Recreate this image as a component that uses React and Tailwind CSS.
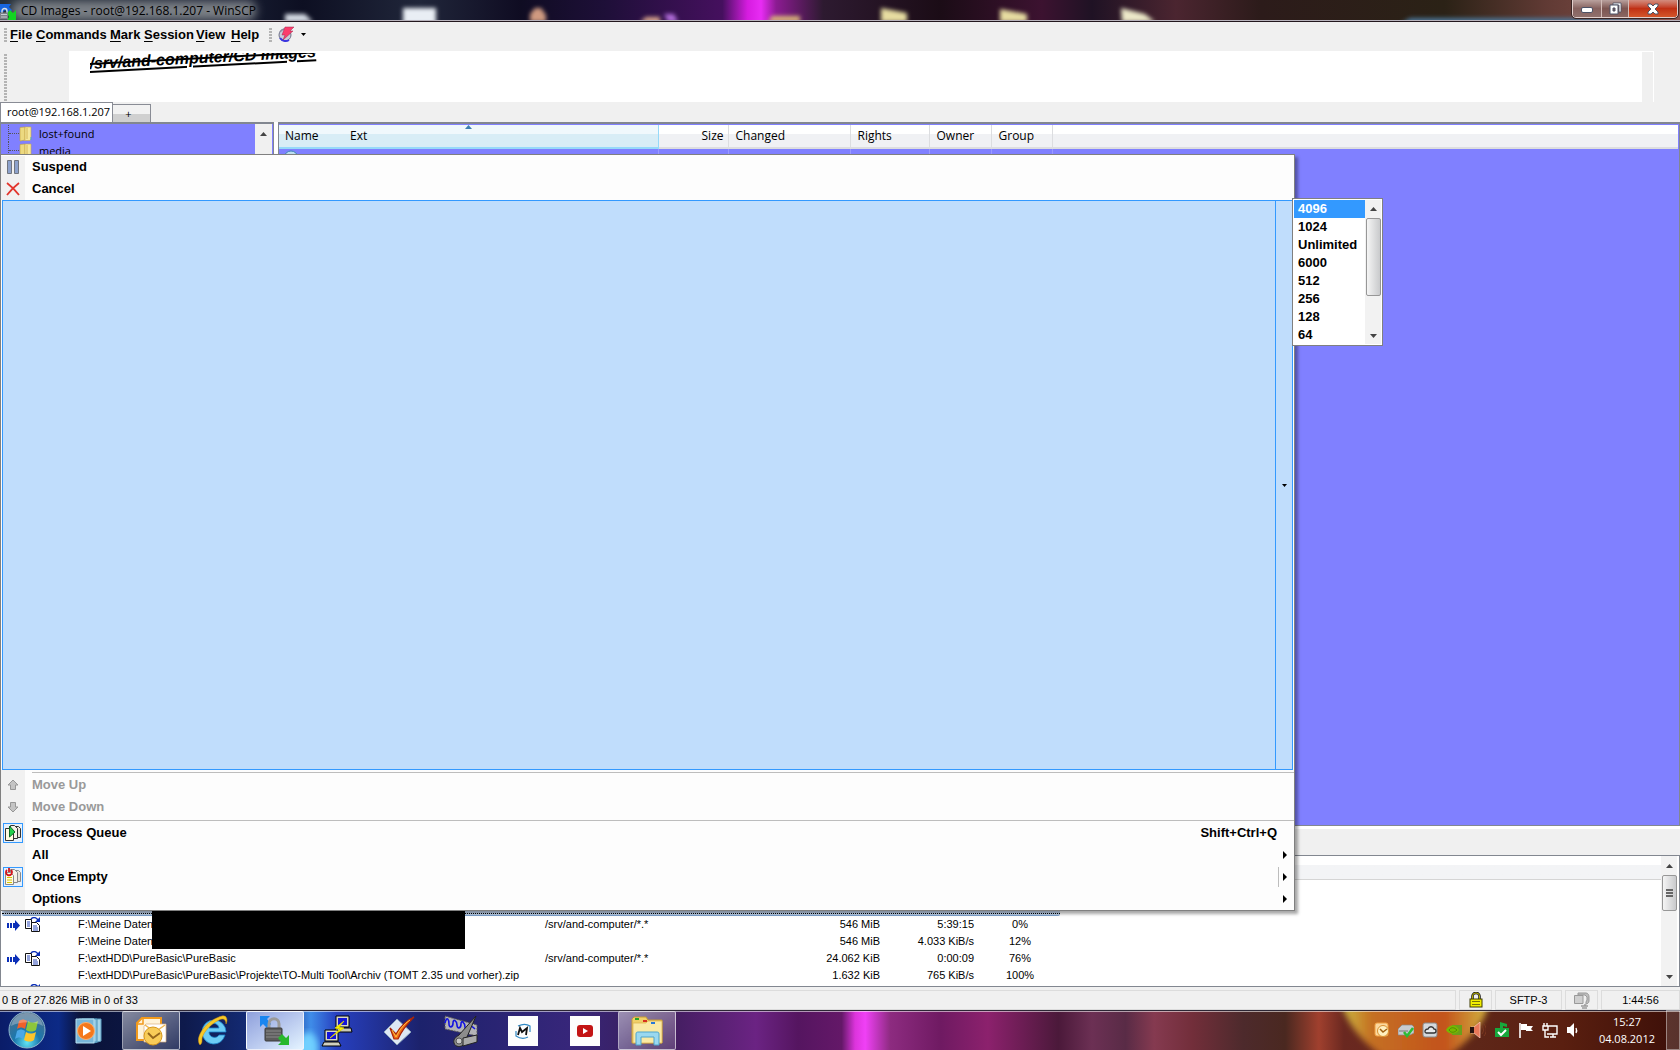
import clsx from "clsx";

const SPEEDS = ["4096", "1024", "Unlimited", "6000", "512", "256", "128", "64"];

const QUEUE = [
  { busy: true, source: "F:\\Meine Daten", target: "/srv/and-computer/*.*", size: "546 MiB", speed: "5:39:15", progress: "0%" },
  { source: "F:\\Meine Daten", size: "546 MiB", speed: "4.033 KiB/s", progress: "12%" },
  { busy: true, source: "F:\\extHDD\\PureBasic\\PureBasic", target: "/srv/and-computer/*.*", size: "24.062 KiB", speed: "0:00:09", progress: "76%" },
  { source: "F:\\extHDD\\PureBasic\\PureBasic\\Projekte\\TO-Multi Tool\\Archiv (TOMT 2.35 und vorher).zip", size: "1.632 KiB", speed: "765 KiB/s", progress: "100%" },
];

const MENUS = [
  { label: "File", width: "w-[26px]" },
  { label: "Commands", width: "w-[74px]" },
  { label: "Mark", width: "w-[34px]" },
  { label: "Session", width: "w-[52px]" },
  { label: "View", width: "w-[35px]" },
  { label: "Help", width: "w-[34px]" },
];

/* ---------- icons ---------- */

function AppIcon() {
  return (
    <svg width="16" height="18" viewBox="0 0 16 18" aria-hidden="true">
      <path d="M0 2h11L9 5l3 3-3 4-4-4-3 3-2-1z" fill="#1766e0" />
      <path d="M16 18H7l2-3-2-4 3-3 3 3 3-3z" fill="#12d422" />
      <path d="M2 11V9a2 2 0 0 1 5 0v2" fill="none" stroke="#d8dde2" strokeWidth="1.4" />
      <rect x="0" y="10.500" width="8" height="7" fill="#7c8288" />
      <path d="M1 12.500h6M1 15h6" stroke="#c7ccd2" />
    </svg>
  );
}

function LightningIcon() {
  return (
    <svg width="17" height="17" viewBox="0 0 17 17" aria-hidden="true">
      <circle cx="7" cy="9" r="6" fill="#c9ccd8" stroke="#70728a" />
      <path d="M2 12c2 3 6 4 9 2" stroke="#3a35e0" strokeWidth="2" fill="none" />
      <path d="M2 6a7 7 0 0 1 4-3" stroke="#8a8ca0" strokeWidth="1.500" fill="none" />
      <path d="M7 1h9l-4 4h3L5 14l2-5H4z" fill="#fb3d6c" stroke="#a02850" strokeWidth=".5" />
    </svg>
  );
}

function FolderIcon() {
  return (
    <svg className="shrink-0" width="14" height="16" viewBox="0 0 14 16" aria-hidden="true">
      <path d="M1 1.500 6 1v13l-5 1z" fill="#ecd980" stroke="#c0a040" strokeWidth=".6" />
      <path d="M6 1h6v12l-1 1.500H5l1-1z" fill="#f5e79c" stroke="#c7aa4c" strokeWidth=".6" />
      <path d="M8 2v11" stroke="#d7b858" />
      <path d="M12 11v3" stroke="#4aa0d8" />
    </svg>
  );
}

function PauseIcon() {
  return (
    <svg width="14" height="16" viewBox="0 0 14 16" aria-hidden="true">
      <path d="M1.500 1.500h4v13h-4zM8.500 1.500h4v13h-4z" fill="#8da2cc" stroke="#70757f" />
    </svg>
  );
}

function CrossIcon() {
  return (
    <svg width="14" height="14" viewBox="0 0 14 14" aria-hidden="true">
      <path d="M1 1c4 3 8 7 12 12M13 1C9 4 5 8 1 13" stroke="#e2352c" strokeWidth="1.800" fill="none" />
    </svg>
  );
}

function MoveIcon({ down }) {
  return (
    <svg className={clsx(down && "rotate-180")} width="12" height="12" viewBox="0 0 12 12" aria-hidden="true">
      <path d="M6 1 1 6h2.500v4.500h5V6H11z" fill="#c4c4c4" stroke="#979797" />
    </svg>
  );
}

function QueueIcon({ stop }) {
  const line = stop ? "#8a8a8a" : "#333";
  return (
    <svg width="18" height="18" viewBox="0 0 18 18" aria-hidden="true">
      <path d="M9.500 2.500h5l2 2v9h-7z" fill="#e8e4da" stroke={line} />
      <path d="M6.500 1.500h4l3 3v10h-7z" fill="#f4f1e8" stroke={line} />
      <path d="M1.500 4.500h5l3 3v9h-8z" fill="#fffbe0" stroke={line} />
      {stop ? (
        <>
          <path d="M3 9.500h5M3 12h5M3 14.500h5" stroke="#d9c600" />
          <path d="M3 2a3 3 0 1 0 4 0M5 0v4" fill="none" stroke="#d4131b" strokeWidth="1.800" />
        </>
      ) : (
        <path d="M5.500 2v11L11 8z" fill="#22d04c" stroke="#0b6a22" />
      )}
    </svg>
  );
}

function TransferIcons() {
  return (
    <svg width="36" height="16" viewBox="0 0 36 16" aria-hidden="true">
      <path d="M0 6h2v5H0zM3 6h2v5H3zM6 6h2V3l5 5.500L8 14v-3H6z" fill="#0b2fb8" />
      <path d="M18.500 2.500h6v9h-6z" fill="#fff" stroke="#111" />
      <path d="M24.500 5.500h5l3 3v6h-8z" fill="#fff" stroke="#111" />
      <path d="M20 5h3M20 7h3M20 9h3M26 9h4M26 11h5M26 13h5" stroke="#2a49b8" />
      <path d="M24 2c2-2 5-2 7 1" fill="none" stroke="#0b2fb8" strokeWidth="1.500" />
      <path d="M33 0v5h-5z" fill="#0b2fb8" />
    </svg>
  );
}

function Triangle({ dir = "up", className = "text-[#444]" }) {
  const shapes = {
    up: { w: 7, h: 4, d: "M0 4l3.500-4L7 4z" },
    down: { w: 7, h: 4, d: "M0 0h7L3.500 4z" },
    right: { w: 4, h: 8, d: "M0 0v8l4-4z" },
    caret: { w: 5, h: 3, d: "M0 0h5L2.500 3z" },
  };
  const { w, h, d } = shapes[dir];
  return (
    <svg className={className} width={w} height={h} aria-hidden="true">
      <path d={d} fill="currentColor" />
    </svg>
  );
}

function PadlockIcon() {
  return (
    <svg width="14" height="16" viewBox="0 0 14 16" aria-hidden="true">
      <path d="M3.500 7V4a3.500 3 0 0 1 7 0v3" fill="none" stroke="#222" strokeWidth="2.600" />
      <path d="M3.500 7V4a3.500 3 0 0 1 7 0v3" fill="none" stroke="#b8b000" />
      <rect x="1" y="7" width="12" height="8" fill="#f2ee00" stroke="#3c3a00" />
      <path d="M3 9.500h8M3 12.500h8" stroke="#77730a" />
    </svg>
  );
}

function ClampIcon() {
  return (
    <svg width="17" height="17" viewBox="0 0 17 17" aria-hidden="true">
      <path d="M5 1h8c2 0 3 2 3 4v4c0 2-2 3-3 3v-2l1-2V5l-2-2H5z" fill="#bdbdbd" stroke="#999" />
      <path d="M1.500 3.500H10v8H1.500z" fill="#cfcfcf" stroke="#999" />
      <path d="M12 12v2M8 14h7M9 16h5" stroke="#9a9a9a" strokeWidth="1.500" />
    </svg>
  );
}

/* ---------- title bar ---------- */

function TitleBackdrop() {
  return (
    <svg className="absolute inset-0 h-full w-full" viewBox="0 0 1680 22" preserveAspectRatio="none" aria-hidden="true">
      <defs>
        <linearGradient id="titleSky">
          <stop offset="0" stopColor="#26303a" />
          <stop offset=".14" stopColor="#171d31" />
          <stop offset=".18" stopColor="#0d0f22" />
          <stop offset=".25" stopColor="#20263a" />
          <stop offset=".31" stopColor="#0f0c22" />
          <stop offset=".36" stopColor="#1e0f38" />
          <stop offset=".43" stopColor="#45105e" />
          <stop offset=".445" stopColor="#d61ce0" />
          <stop offset=".453" stopColor="#e82cf4" />
          <stop offset=".462" stopColor="#8c1b92" />
          <stop offset=".49" stopColor="#2d1a30" />
          <stop offset=".56" stopColor="#1b0c16" />
          <stop offset=".62" stopColor="#3c1230" />
          <stop offset=".65" stopColor="#1f1224" />
          <stop offset=".7" stopColor="#4b2530" />
          <stop offset=".75" stopColor="#2c1b1a" />
          <stop offset=".86" stopColor="#2b2216" />
          <stop offset=".92" stopColor="#603a34" />
          <stop offset="1" stopColor="#8d5650" />
        </linearGradient>
        <filter id="soft" x="-20%" y="-50%" width="140%" height="200%">
          <feGaussianBlur stdDeviation="2" />
        </filter>
        <filter id="softer" x="-20%" y="-80%" width="140%" height="260%">
          <feGaussianBlur stdDeviation="5" />
        </filter>
      </defs>
      <rect width="1680" height="22" fill="url(#titleSky)" />
      <rect x="12" y="1" width="244" height="19" rx="8" fill="#7b8086" filter="url(#softer)" />
      <g filter="url(#soft)">
        <path d="M285 14h20l8 8h-28z" fill="#d5dbe4" />
        <rect x="403" y="8" width="33" height="16" fill="#e9eef4" />
        <path d="M530 22v-8l5-6h6l5 7v7z" fill="#cf9a80" />
        <path d="M640 22l6-5h14v7z" fill="#d9a48c" />
        <path d="M664 14h10l4 8h-10z" fill="#b06cd8" />
        <path d="M768 22l4-6h28v6z" fill="#d8b478" />
        <path d="M881 8l26 5v9h-26z" fill="#e6dca0" />
        <path d="M1000 9l27 5v8h-27z" fill="#e6dca0" />
        <path d="M1121 8l24 6 10 8h-33z" fill="#ece8c8" />
        <path d="M1410 18h230v6h-240z" fill="#4b7595" />
      </g>
      <path d="M0 20.500h1680" stroke="#b9b4bd" />
      <path d="M0 21.500h1680" stroke="#24181f" />
    </svg>
  );
}

function TitleBar() {
  return (
    <header className="relative flex h-[22px] shrink-0 items-center overflow-hidden">
      <TitleBackdrop />
      <div className="relative flex flex-1 items-center gap-[5px]">
        <AppIcon />
        <h1 className="text-[12px] leading-4 text-black">CD Images - root@192.168.1.207 - WinSCP</h1>
      </div>
      <div className="relative mr-0.5 flex h-[18px] self-start overflow-hidden rounded-b border border-t-0 border-[#e2cfcc] outline outline-[#3a2524]">
        <button aria-label="Minimize" className="flex w-7 items-end justify-center bg-gradient-to-b from-[#b9a19e] via-[#86625f] to-[#90706c] pb-1">
          <span className="h-1.5 w-3 rounded-xs border border-[#4c5266] bg-white" />
        </button>
        <button aria-label="Restore" className="flex w-7 items-center justify-center border-x border-[#d3bcb8] bg-gradient-to-b from-[#b9a19e] via-[#7c5551] to-[#8a6662]">
          <svg width="13" height="13" viewBox="0 0 13 13">
            <path d="M4 1h8v9h-2V3H4z" fill="#fff" stroke="#4c5266" strokeWidth=".8" />
            <path d="M1 3h8v9H1z M4 6v3h2V6z" fill="#fff" fillRule="evenodd" stroke="#4c5266" />
          </svg>
        </button>
        <button aria-label="Close" className="flex w-12 items-center justify-center bg-gradient-to-b from-[#d28c7e] via-[#c03014] to-[#d4552a]">
          <svg width="14" height="12" viewBox="0 0 14 12">
            <path d="M2 1h3l2 2 2-2h3v2L9 6l3 3v2H9L7 9l-2 2H2V9l3-3-3-3z" fill="#fff" stroke="#4c5266" />
          </svg>
        </button>
      </div>
    </header>
  );
}

/* ---------- menu bar, address bar, tabs ---------- */

function Grip({ className }) {
  return <span className={clsx("w-[3px] bg-[repeating-linear-gradient(#b4b4b4_0_2px,transparent_2px_3px)]", className)} />;
}

function MenuBar() {
  return (
    <nav className="flex h-[29px] shrink-0 items-center bg-[#f0f0f0] pb-1 pl-1 font-['Liberation_Sans',sans-serif] text-[13px] font-bold">
      <Grip className="mr-[3px] h-3.5" />
      {MENUS.map(({ label, width }) => (
        <button key={label} className={clsx("shrink-0 overflow-hidden text-left leading-5 whitespace-nowrap", width)}>
          <span className="underline underline-offset-2">{label[0]}</span>
          {label.slice(1)}
        </button>
      ))}
      <Grip className="ml-1 h-3.5" />
      <button aria-label="Disconnect" className="ml-1.5 flex items-center gap-1.5">
        <LightningIcon />
        <Triangle dir="caret" className="text-black" />
      </button>
    </nav>
  );
}

function AddressBar() {
  return (
    <div className="flex h-[51px] shrink-0 bg-[#f0f0f0] pl-1">
      <Grip className="mt-[3px]" />
      <div className="ml-[62px] flex-1 overflow-hidden bg-white pt-0.5 pl-[21px]">
        <div className="h-12 overflow-hidden">
          <p className="w-max origin-bottom-left -rotate-3 font-['Liberation_Sans',sans-serif] text-[16px] leading-[22px] font-bold italic">
            <span className="underline decoration-2 underline-offset-2">
              <span className="line-through decoration-2">/srv/and-computer/CD Images</span>
            </span>
          </p>
        </div>
      </div>
      <div className="mr-[26px] w-3 border-t border-r border-white" />
    </div>
  );
}

function Tabs() {
  return (
    <div className="flex h-5 shrink-0 items-end bg-[#f0f0f0] text-[11px]">
      <button className="h-5 w-[113px] border border-b-0 border-[#898c95] bg-white pl-1.5 text-left whitespace-nowrap text-black">root@192.168.1.207</button>
      <button aria-label="New tab" className="h-[18px] w-[38px] border border-b-0 border-l-0 border-[#898c95] bg-gradient-to-b from-[#f2f2f2] from-50% to-[#d0d0d0] to-50% pr-1.5 leading-4">
        +
      </button>
    </div>
  );
}

/* ---------- directory tree and file list ---------- */

function Tree() {
  return (
    <aside className="flex w-[274px] shrink-0 border-x border-t-2 border-[#828790] bg-[#8080ff]">
      <ul className="flex-1 overflow-hidden pt-px text-[11px] leading-[17px]">
        {["lost+found", "media"].map((name) => (
          <li key={name} className="flex items-center">
            <span className="ml-[7px] h-[17px] w-px border-l border-dotted border-[#555]" />
            <span className="w-2.5 border-t border-dotted border-[#555]" />
            <FolderIcon />
            <span className="ml-1.5">{name}</span>
          </li>
        ))}
      </ul>
      <div className="mr-px flex w-[17px] justify-center bg-[#f0f0f0] pt-2">
        <Triangle />
      </div>
    </aside>
  );
}

const COLUMNS = [
  { name: "Size", width: "w-[70px]", align: "pr-1 text-right" },
  { name: "Changed", width: "w-[122px]", align: "pl-[7px]" },
  { name: "Rights", width: "w-[79px]", align: "pl-[7px]" },
  { name: "Owner", width: "w-[62px]", align: "pl-[7px]" },
  { name: "Group", width: "w-[61px]", align: "pl-[7px]" },
];

function FileList() {
  return (
    <main className="min-w-0 flex-1 border-x border-t-2 border-b border-[#828790] bg-[#8080ff] pt-px pr-px">
      <table className="w-full table-fixed border-collapse text-[12px]">
        <thead>
          <tr className="h-[23px] bg-gradient-to-b from-white from-40% to-[#f0f1f4] to-40% text-left">
            <th className="relative w-[379px] border-r border-b-2 border-[#96d9f9] bg-gradient-to-b from-[#f0f8fc] from-40% to-[#d8edf6] to-40% pl-1.5 font-normal">
              <span className="inline-block w-[65px]">Name</span>Ext
              <Triangle className="absolute top-0 left-[186px] text-[#3c7fb1]" />
            </th>
            {COLUMNS.map(({ name, width, align }) => (
              <th key={name} className={clsx("border-r border-b-2 border-[#dcdde0] font-normal", width, align)}>
                {name}
              </th>
            ))}
            <th className="border-b-2 border-l border-[#dcdde0]" />
          </tr>
        </thead>
        <tbody>
          <tr className="h-[18px]">
            <td className="border-r border-[#9a9aff] pl-1">
              <svg width="16" height="16" viewBox="0 0 16 16" aria-hidden="true">
                <circle cx="8" cy="8" r="7" fill="#bcdcf0" stroke="#3f86b8" />
                <circle cx="8" cy="8" r="2" fill="#fff" />
              </svg>
            </td>
            {COLUMNS.map(({ name }) => (
              <td key={name} className="border-r border-[#9a9aff]" />
            ))}
            <td />
          </tr>
        </tbody>
      </table>
    </main>
  );
}

/* ---------- transfer queue ---------- */

function Queue() {
  return (
    <section className="flex h-[132px] shrink-0 border border-[#828790] bg-white">
      <div className="min-w-0 flex-1 overflow-hidden">
        <div className="h-6 border-b border-[#d5d5d5] bg-gradient-to-b from-white from-40% to-[#f3f4f6] to-40%" />
        <div className="mr-[601px] ml-px h-9 rounded-b-xs border-b border-[#7da2ce] bg-[#c5d8f0] pb-px">
          <div className="h-full border-b border-dotted border-black" />
        </div>
        <table className="w-full table-fixed font-['Liberation_Sans',sans-serif] text-[11px] leading-[17px] whitespace-nowrap">
          <colgroup>
            <col className="w-[77px]" />
            <col className="w-[467px]" />
            <col className="w-[225px]" />
            <col className="w-[110px]" />
            <col className="w-[94px]" />
            <col className="w-[92px]" />
            <col />
          </colgroup>
          <tbody>
            {QUEUE.map((row) => (
              <tr key={row.source + row.progress} className="h-[17px]">
                <td className="pl-1.5">{row.busy && <TransferIcons />}</td>
                <td>{row.source}</td>
                <td>{row.target}</td>
                <td className="text-right">{row.size}</td>
                <td className="text-right">{row.speed}</td>
                <td className="text-center">{row.progress}</td>
                <td />
              </tr>
            ))}
            <tr>
              <td className="pl-1.5 align-top">
                <TransferIcons />
              </td>
            </tr>
          </tbody>
        </table>
      </div>
      <div className="mr-0.5 flex w-4 flex-col items-center bg-[#f2f2f2] pt-2 pb-[7px]">
        <Triangle />
        <div className="mt-[7px] flex h-9 w-[15px] flex-col items-center justify-center gap-px rounded-xs border border-[#979797] bg-gradient-to-r from-[#f5f5f5] to-[#c9cacc]">
          <span className="h-0.5 w-[7px] bg-[#666]" />
          <span className="h-0.5 w-[7px] bg-[#666]" />
          <span className="h-0.5 w-[7px] bg-[#666]" />
        </div>
        <Triangle dir="down" className="mt-auto text-[#444]" />
      </div>
    </section>
  );
}

function StatusBar() {
  return (
    <footer className="flex h-[23px] shrink-0 gap-[3px] bg-[#f0f0f0] pt-[3px] font-['Liberation_Sans',sans-serif] text-[11px]">
      <p className="flex flex-1 items-center border border-l-0 border-[#dcdcdc] pl-0.5">0 B of 27.826 MiB in 0 of 33</p>
      <span className="flex w-[33px] items-center justify-center border border-[#dcdcdc]"><PadlockIcon /></span>
      <span className="flex w-[67px] items-center justify-center border border-[#dcdcdc]">SFTP-3</span>
      <span className="flex w-[33px] items-center justify-center border border-[#dcdcdc]"><ClampIcon /></span>
      <span className="flex w-[79px] items-center justify-center border border-[#dcdcdc]">1:44:56</span>
    </footer>
  );
}

/* ---------- queue popup menu ---------- */

function MenuItem({ icon, label, shortcut, submenu, split, disabled, checked }) {
  return (
    <button disabled={disabled} className={clsx("flex h-[22px] w-full shrink-0 items-center text-left", disabled ? "text-[#999]" : "text-black")}>
      <span className="flex h-full w-6 items-center justify-center bg-[#f1f1f1]">
        <span className={clsx("flex items-center justify-center", checked && "size-5 border border-[#3399ff] bg-[#e6f0fb]")}>{icon}</span>
      </span>
      <span className="ml-[7px] flex-1">{label}</span>
      {shortcut && <span className="mr-[17px]">{shortcut}</span>}
      {submenu && (
        <span className={clsx("mr-[7px] flex h-5 items-center pl-1", split && "border-l border-[#bdbdbd]")}>
          <Triangle dir="right" className="text-black" />
        </span>
      )}
    </button>
  );
}

function Separator() {
  return (
    <div className="flex h-1 shrink-0 items-center">
      <span className="h-full w-6 bg-[#f1f1f1]" />
      <span className="ml-[7px] h-px flex-1 bg-[#bdbdbd]" />
    </div>
  );
}

function QueueMenu() {
  return (
    <div className="absolute top-[154px] right-[385px] bottom-[139px] left-0 flex flex-col border border-[#808080] bg-[#fdfdfd] font-['Liberation_Sans',sans-serif] text-[13px] font-bold shadow-[3px_3px_3px_rgba(0,0,0,0.35)]">
      <div className="h-px shrink-0" />
      <MenuItem icon={<PauseIcon />} label="Suspend" />
      <MenuItem icon={<CrossIcon />} label="Cancel" />
      <div className="mx-px flex min-h-0 flex-1 border border-[#3399ff] bg-[#c0ddfc]">
        <input aria-label="Speed limit" className="min-w-0 flex-1 bg-transparent outline-none" />
        <button aria-label="Choose speed" className="flex w-[17px] items-center justify-center border-l border-[#3399ff]">
          <Triangle dir="caret" className="text-black" />
        </button>
      </div>
      <Separator />
      <MenuItem icon={<MoveIcon />} label="Move Up" disabled />
      <MenuItem icon={<MoveIcon down />} label="Move Down" disabled />
      <Separator />
      <MenuItem icon={<QueueIcon />} label="Process Queue" shortcut="Shift+Ctrl+Q" checked />
      <MenuItem label="All" submenu />
      <MenuItem icon={<QueueIcon stop />} label="Once Empty" submenu split checked />
      <MenuItem label="Options" submenu />
    </div>
  );
}

function SpeedList() {
  return (
    <div className="absolute top-[198px] right-[297px] flex w-[91px] border border-[#808080] bg-white p-px">
      <select
        size={8}
        defaultValue="4096"
        aria-label="Speed"
        className="h-36 min-w-0 flex-1 overflow-hidden border-0 p-0 font-['Liberation_Sans',sans-serif] text-[13px] font-bold outline-none [scrollbar-width:none]"
      >
        {SPEEDS.map((speed) => (
          <option
            key={speed}
            value={speed}
            className="h-[18px] min-h-[18px] px-1 pt-px pb-0 leading-[17px] font-bold text-black checked:bg-[#3399ff] checked:bg-linear-to-r checked:from-[#3399ff] checked:to-[#3399ff] checked:[-webkit-text-fill-color:white]"
          >
            {speed}
          </option>
        ))}
      </select>
      <div className="flex w-4 flex-col items-center bg-[#f2f2f2] pt-[7px] pb-1.5">
        <Triangle />
        <div className="mt-[7px] h-[78px] w-[15px] rounded-xs border border-[#979797] bg-gradient-to-r from-[#f5f5f5] to-[#c9cacc]" />
        <Triangle dir="down" className="mt-auto text-[#444]" />
      </div>
    </div>
  );
}

/* ---------- taskbar ---------- */

function TaskbarBackdrop() {
  return (
    <svg className="absolute inset-0 h-full w-full" viewBox="0 0 1680 40" preserveAspectRatio="none" aria-hidden="true">
      <defs>
        <linearGradient id="taskSky">
          <stop offset="0" stopColor="#0a1c68" />
          <stop offset=".035" stopColor="#0c2a86" />
          <stop offset=".048" stopColor="#0a1238" />
          <stop offset=".11" stopColor="#0e1a4c" />
          <stop offset=".17" stopColor="#17348c" />
          <stop offset=".185" stopColor="#3f8ce8" />
          <stop offset=".2" stopColor="#2740c0" />
          <stop offset=".25" stopColor="#1c226c" />
          <stop offset=".34" stopColor="#37267a" />
          <stop offset=".39" stopColor="#3b1d5a" />
          <stop offset=".45" stopColor="#6b2383" />
          <stop offset=".475" stopColor="#551560" />
          <stop offset=".501" stopColor="#641868" />
          <stop offset=".509" stopColor="#dc34dc" />
          <stop offset=".515" stopColor="#f040f6" />
          <stop offset=".53" stopColor="#8d2b80" />
          <stop offset=".56" stopColor="#6f1a62" />
          <stop offset=".588" stopColor="#8c216d" />
          <stop offset=".63" stopColor="#4b193a" />
          <stop offset=".65" stopColor="#6c3054" />
          <stop offset=".67" stopColor="#592b46" />
          <stop offset=".687" stopColor="#853a50" />
          <stop offset=".71" stopColor="#722e3a" />
          <stop offset=".74" stopColor="#4d2a2c" />
          <stop offset=".765" stopColor="#4a2820" />
          <stop offset=".785" stopColor="#a0402e" />
          <stop offset=".8" stopColor="#6a2820" />
          <stop offset=".88" stopColor="#5e2618" />
          <stop offset=".93" stopColor="#5a1f10" />
          <stop offset="1" stopColor="#3c0f08" />
        </linearGradient>
        <linearGradient id="taskFlare">
          <stop offset="0" stopColor="#cdbb42" />
          <stop offset=".2" stopColor="#c47022" />
          <stop offset=".7" stopColor="#c3521c" />
          <stop offset="1" stopColor="#d2b440" />
        </linearGradient>
        <filter id="taskBlur">
          <feGaussianBlur stdDeviation="3" />
        </filter>
      </defs>
      <rect width="1680" height="40" fill="url(#taskSky)" />
      <path d="M1342-4h146c-4 18-20 36-40 50h-66c-20-14-34-32-40-50z" fill="url(#taskFlare)" filter="url(#taskBlur)" />
      <ellipse cx="308" cy="38" rx="10" ry="16" fill="#6fd0ff" filter="url(#taskBlur)" />
      <path d="M0 .5h1680" stroke="#2c2634" />
      <path d="M0 1.500h1680" stroke="#fff" strokeOpacity=".55" />
    </svg>
  );
}

function StartOrb() {
  return (
    <svg width="38" height="38" viewBox="0 0 38 38" aria-hidden="true">
      <defs>
        <radialGradient id="orb" cx=".5" cy=".85" r=".8">
          <stop offset="0" stopColor="#5fe4f5" />
          <stop offset=".45" stopColor="#1b78ad" />
          <stop offset="1" stopColor="#4a6d8c" />
        </radialGradient>
      </defs>
      <circle cx="19" cy="19" r="18" fill="url(#orb)" stroke="#8fb6cc" />
      <path d="M11 10c3-2 5-2 8 0l-2 8c-3-2-5-2-8 0z" fill="#f0602a" />
      <path d="M20 10c3 2 6 2 10 0l-2 9c-3 2-6 2-10 0z" fill="#8cc63c" />
      <path d="M9 20c3-2 5-2 8 0l-2 8c-3-2-5-2-8 0z" fill="#4aa8e8" />
      <path d="M18 21c3 2 6 2 10 0l-2 8c-3 2-6 2-10 0z" fill="#fcc52c" />
      <path d="M3 15C5 5 13 2 19 2s14 3 16 13c-9-5-22-5-32 0z" fill="#fff" opacity=".28" />
    </svg>
  );
}

function MediaPlayerIcon() {
  return (
    <svg width="28" height="26" viewBox="0 0 28 26" aria-hidden="true">
      <path d="M7 1h19v22l-7 2z" fill="#a7d6ea" stroke="#5a9cc0" />
      <path d="M4 1h18v23H4z" fill="#8cc4e0" stroke="#4c92b8" />
      <path d="M1 1h18v24H1z" fill="#78b6d8" stroke="#b8e0f0" />
      <circle cx="11" cy="13" r="8.500" fill="#f4781c" stroke="#fbb070" />
      <path d="M8 8v10l8-5z" fill="#fff" />
    </svg>
  );
}

function OutlookIcon() {
  return (
    <svg width="32" height="30" viewBox="0 0 32 30" aria-hidden="true">
      <path d="M7 2h19v22H2V7z" fill="#fff3d8" stroke="#f29a1c" strokeWidth="2" />
      <path d="M3 8h5V3" fill="none" stroke="#f29a1c" strokeWidth="1.500" />
      <path d="M11 8h20v18H9V10z" fill="#fff" stroke="#d8b080" strokeWidth=".7" />
      <path d="M10 9l10 7 10-7" fill="none" stroke="#f0b850" strokeWidth="1.500" />
      <circle cx="18" cy="20" r="9" fill="#f8cc58" stroke="#d8981c" />
      <path d="M13 17l5 5 7-5" fill="none" stroke="#94661c" strokeWidth="1.800" />
    </svg>
  );
}

function ExplorerEIcon() {
  return (
    <svg width="32" height="32" viewBox="0 0 32 32" aria-hidden="true">
      <path d="M28 20c-2 6-6 9-12 9A12 12 0 1 1 29 17H12c0 6 8 7 10 3zM12 13h10c-1-6-9-6-10 0z" fill="#6cccf6" stroke="#1a84cc" strokeWidth=".8" fillRule="evenodd" />
      <path d="M3 30C-3 23 9 5 25 1c5-1 6 4 4 8 0-5-3-6-7-4C12 10 4 20 5 26c0 2-1 3-2 4z" fill="#f8c928" stroke="#c88c10" strokeWidth=".5" />
    </svg>
  );
}

function WinScpIcon() {
  return (
    <svg width="34" height="32" viewBox="0 0 34 32" aria-hidden="true">
      <path d="M2 1h10L9 4l4 5-4 4-4-4-3 3z" fill="#1a86f0" />
      <path d="M11 15V9c0-7 10-7 10 0v6" fill="none" stroke="#9a9a9a" strokeWidth="3" />
      <rect x="7" y="13" width="17" height="13" rx="1" fill="#5c5c5c" stroke="#3a3a3a" />
      <path d="M8 16h15M8 19h15M8 22h15" stroke="#8a8a8a" />
      <path d="M31 30H20l3-3-3-4 4-4 4 4 3-3z" fill="#28b82c" />
    </svg>
  );
}

function PuttyIcon() {
  return (
    <svg width="32" height="32" viewBox="0 0 32 32" aria-hidden="true">
      <path d="M15 1h13v11H15z" fill="#d8d8c8" stroke="#000" />
      <path d="M17 3h9v7h-9z" fill="#1414d8" />
      <path d="M15 13h15l1 4H13z" fill="#c8c8b8" stroke="#000" />
      <path d="M4 15h13v11H4z" fill="#d8d8c8" stroke="#000" />
      <path d="M6 17h9v7H6z" fill="#1414d8" />
      <path d="M3 27h15l2 4H1z" fill="#d0d0c0" stroke="#000" />
      <path d="M23 6l-9 7 5 1-10 9 14-10-5-1z" fill="#f8f000" stroke="#e0d400" strokeWidth=".8" />
    </svg>
  );
}

function CheckIcon() {
  return (
    <svg width="32" height="30" viewBox="0 0 32 30" aria-hidden="true">
      <path d="M1 16L14 3l14 13-14 13z" fill="#dde8f4" stroke="#8ca4bc" />
      <path d="M7 12l6 6C17 11 22 5 31 1c-6 6-12 13-16 22h-4z" fill="#f06a18" stroke="#a82408" strokeWidth="1.200" />
      <path d="M9 14l4 7c4-8 8-13 14-17" fill="none" stroke="#fcc040" />
    </svg>
  );
}

function WaveIcon() {
  return (
    <svg width="34" height="34" viewBox="0 0 34 34" aria-hidden="true">
      <path d="M1 2l32 9v11L1 15z" fill="#b4b4b8" stroke="#555" strokeDasharray="2 1" />
      <path d="M1 9c2-8 4-3 4 1s4 4 4-1 4-2 4 2 4 4 4-1 4-1 4 3 3 4 4 1 3-2 6 1" stroke="#1414e0" strokeWidth="1.600" fill="none" />
      <path d="M32 2L20 30c-3 4-9 3-10-1s2-6 5-8z" fill="#8c8c8c" stroke="#222" />
      <path d="M19 24l14-3v7l-14 4z" fill="#aaa" stroke="#222" />
      <circle cx="15" cy="27" r="3" fill="#c8c8c8" stroke="#555" />
    </svg>
  );
}

function LogoMIcon() {
  return (
    <svg width="30" height="30" viewBox="0 0 30 30" aria-hidden="true">
      <rect width="30" height="30" fill="#fdfdfd" />
      <path d="M10 10c4-2 9-2 12 0v6M20 21c-4 2-9 1-12-1v-5" fill="none" stroke="#2f88c4" strokeWidth="1.200" />
      <path d="M10 19l2-7 2 4 5-4-1 7" fill="none" stroke="#111" strokeWidth="1.800" />
    </svg>
  );
}

function TubeIcon() {
  return (
    <svg width="30" height="30" viewBox="0 0 30 30" aria-hidden="true">
      <rect width="30" height="30" fill="#fdfdfd" />
      <rect x="7" y="9" width="16" height="12" rx="3" fill="#c31414" />
      <path d="M13 12v6l5-3z" fill="#fff" />
    </svg>
  );
}

function ExplorerIcon() {
  return (
    <svg width="34" height="31" viewBox="0 0 34 31" aria-hidden="true">
      <path d="M2 4l2-2h12l2 3h14v23H2z" fill="#f0cf68" stroke="#c49a38" />
      <path d="M3 8h13l2-2h14v22H3z" fill="#fae9a4" stroke="#d8b04c" strokeWidth=".7" />
      <path d="M5 3h4v2H5z" fill="#28a428" />
      <path d="M13 5h4v2h-4z" fill="#d83020" />
      <path d="M21 7h4v2h-4z" fill="#2878d8" />
      <path d="M6 30V19c0-2 1-2 3-2h17c2 0 3 0 3 2v11h-5v-8H11v8z" fill="#9ad8f0" stroke="#4fa4cc" />
    </svg>
  );
}

const TASKS = [
  { label: "Windows Media Player", icon: <MediaPlayerIcon /> },
  { label: "Outlook", icon: <OutlookIcon />, open: true },
  { label: "Internet Explorer", icon: <ExplorerEIcon /> },
  { label: "WinSCP", icon: <WinScpIcon />, active: true },
  { label: "PuTTY", icon: <PuttyIcon /> },
  { label: "Tasks", icon: <CheckIcon /> },
  { label: "Wave editor", icon: <WaveIcon /> },
  { label: "M", icon: <LogoMIcon /> },
  { label: "Video", icon: <TubeIcon /> },
  { label: "Explorer", icon: <ExplorerIcon />, open: true },
];

function TrayIcons() {
  return (
    <div className="flex items-center gap-2">
      <svg width="16" height="16" viewBox="0 0 16 16">
        <rect x="1" y="1" width="13" height="13" rx="2" fill="#fbd9a0" stroke="#f0a040" />
        <circle cx="9" cy="9" r="5.500" fill="#fff0c0" stroke="#d89030" />
        <path d="M6 7l3 3 4-3" fill="none" stroke="#a06010" strokeWidth="1.500" />
      </svg>
      <svg width="16" height="16" viewBox="0 0 16 16">
        <path d="M0 7l4-4h10l2 2v6l-4 2H0z" fill="#c8ccd0" stroke="#888" strokeWidth=".7" />
        <path d="M1 9h9" stroke="#777" />
        <path d="M6 10l3 4 6-8" fill="none" stroke="#2cbc34" strokeWidth="2.500" />
      </svg>
      <svg width="16" height="16" viewBox="0 0 16 16">
        <rect x="1" y="1" width="14" height="14" rx="2" fill="#d4d8dc" stroke="#888" />
        <path d="M4 11h8a2 2 0 0 0 0-4c-1-3-5-3-6 0-3 0-4 3-2 4z" fill="#e8eaec" stroke="#333" strokeWidth="1.300" />
      </svg>
      <svg width="16" height="16" viewBox="0 0 16 16">
        <path d="M6 3h10v10H6z" fill="#6aa01a" />
        <path d="M0 8c3-6 10-6 13 0-3 5-10 5-13 0z" fill="#76b900" />
        <path d="M3 8c2-3 5-3 8 0-3 3-6 3-8 0z" fill="none" stroke="#4d7c08" strokeWidth=".8" />
      </svg>
      <svg width="16" height="16" viewBox="0 0 16 16">
        <path d="M1 5h3l6-5v16l-6-5H1z" fill="#e87858" stroke="#fbd0c0" strokeWidth=".7" />
        <path d="M0 5h4v6H0z" fill="#2a1410" />
        <path d="M12 4c2 3 2 5 0 8M14 2c3 4 3 8 0 12" stroke="#7c3820" fill="none" />
      </svg>
      <svg width="16" height="16" viewBox="0 0 16 16">
        <path d="M1 6h5V0l7 2v3l-4-1v2h6v9H1z" fill="#17a83c" />
        <path d="M4 10l3 3 5-5" fill="none" stroke="#fff" strokeWidth="2" />
      </svg>
      <svg width="16" height="16" viewBox="0 0 16 16">
        <path d="M2 1v15" stroke="#fff" strokeWidth="1.600" />
        <path d="M3 2h6v2h6l-2 3 2 2H8V8H3z" fill="#fff" />
      </svg>
      <svg width="16" height="16" viewBox="0 0 16 16">
        <path d="M6 4h9v8H5M8 15h6M11 12v3M3 8v7h4M1 4h5v4H1zM2 4V1M5 4V1" fill="none" stroke="#fff" strokeWidth="1.400" />
      </svg>
      <svg width="16" height="16" viewBox="0 0 16 16">
        <path d="M1 5h3l4-4v14l-4-4H1z" fill="#fff" />
        <path d="M10 6c1 2 1 3 0 5" stroke="#fff" fill="none" strokeWidth="1.400" />
      </svg>
    </div>
  );
}

function Taskbar() {
  return (
    <footer className="relative flex h-10 shrink-0 overflow-hidden">
      <TaskbarBackdrop />
      <button aria-label="Start" className="relative ml-2 flex w-[38px] items-center">
        <StartOrb />
      </button>
      <div className="relative ml-3.5 flex flex-1 items-stretch gap-1 pt-px">
        {TASKS.map(({ label, icon, open, active }) => (
          <button
            key={label}
            aria-label={label}
            className={clsx(
              "flex w-[58px] items-center justify-center rounded-xs border",
              active && "border-white/80 bg-gradient-to-br from-[#8fa0dc] via-[#b8c8ee] to-[#e4f4ff]",
              open && "border-white/50 bg-gradient-to-br from-white/50 to-white/15",
              !open && !active && "border-transparent"
            )}
          >
            {icon}
          </button>
        ))}
      </div>
      <div className="relative flex items-center">
        <TrayIcons />
        <p className="ml-[17px] text-center text-[11px] leading-[17px] text-white">
          15:27
          <br />
          04.08.2012
        </p>
        <button aria-label="Show desktop" className="ml-[11px] h-full w-3.5 border border-white/40 bg-white/15" />
      </div>
    </footer>
  );
}

export default function App() {
  return (
    <div className="relative flex h-screen flex-col overflow-hidden bg-[#f0f0f0] font-['Open_Sans',sans-serif] text-black">
      <TitleBar />
      <MenuBar />
      <AddressBar />
      <Tabs />
      <div className="flex min-h-0 flex-1 gap-1 bg-white">
        <Tree />
        <FileList />
      </div>
      <div className="h-[29px] shrink-0 border-t-3 border-white bg-[#f0f0f0]" />
      <Queue />
      <StatusBar />
      <Taskbar />
      <div className="absolute bottom-[101px] left-[152px] h-[39px] w-[313px] bg-black" />
      <QueueMenu />
      <SpeedList />
    </div>
  );
}
